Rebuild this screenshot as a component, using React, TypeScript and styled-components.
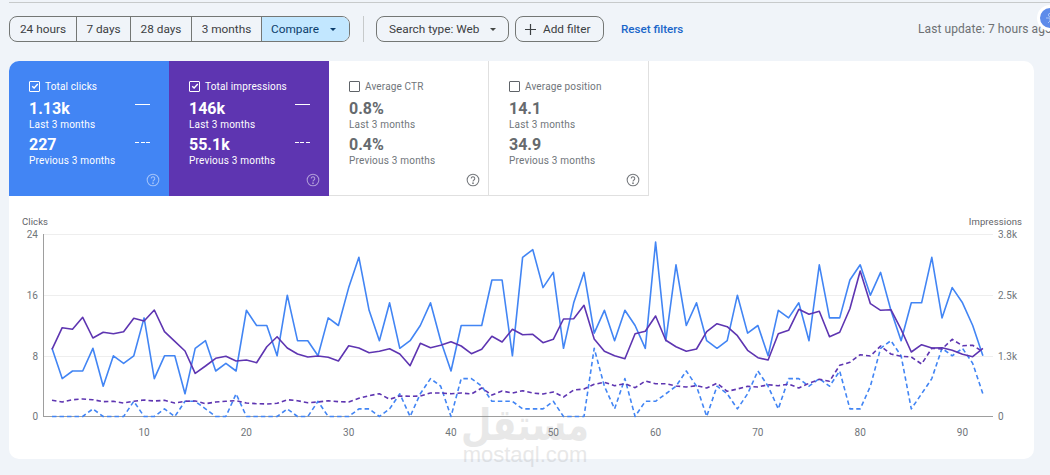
import React from "react";
import styled, { createGlobalStyle } from "styled-components";

const Global = createGlobalStyle`
  html, body { margin: 0; padding: 0; background: #f0f4f9; }
  body { width: 1050px; height: 475px; overflow: hidden; font-family: Roboto, "Liberation Sans", sans-serif; }
`;

const Page = styled.div`
  position: relative;
  width: 1050px;
  height: 475px;
  overflow: hidden;
  background: #f0f4f9;
  border-top: 1px solid transparent;
  box-sizing: border-box;
`;
const TopRule = styled.div`
  height: 1px;
  margin: 1px 0 0 9px;
  background: #c7cacb;
`;
const Toolbar = styled.div`
  display: flex;
  align-items: center;
  height: 26px;
  margin: 13px 0 0 9px;
`;
const Segments = styled.div`
  display: flex;
  height: 26px;
  box-sizing: border-box;
  border: 1px solid #747775;
  border-radius: 8px;
  overflow: hidden;
`;
const Segment = styled.div<{ $w: number; $active?: boolean }>`
  display: flex;
  align-items: center;
  justify-content: ${(p) => (p.$active ? "flex-start" : "center")};
  width: ${(p) => p.$w}px;
  box-sizing: border-box;
  padding-left: ${(p) => (p.$active ? "9px" : "0")};
  font-size: 11.8px;
  color: ${(p) => (p.$active ? "#0b3d6b" : "#3c4043")};
  background: ${(p) => (p.$active ? "#c2e7ff" : "transparent")};
  & + & { border-left: 1px solid #747775; }
`;
const Caret = styled.span<{ $dark?: boolean }>`
  width: 0;
  height: 0;
  margin-left: 11px;
  border-left: 3px solid transparent;
  border-right: 3px solid transparent;
  border-top: 3px solid ${(p) => (p.$dark ? "#444746" : "#0b3d6b")};
`;
const Divider = styled.div`
  width: 1px;
  height: 26px;
  margin: 0 12px 0 13px;
  background: #c7cacb;
`;
const Chip = styled.div<{ $w: number }>`
  display: flex;
  align-items: center;
  height: 26px;
  width: ${(p) => p.$w}px;
  box-sizing: border-box;
  border: 1px solid #747775;
  border-radius: 8px;
  font-size: 11.8px;
  color: #3c4043;
  padding-left: 12px;
  margin-right: 6px;
`;
const PlusIcon = styled.svg`
  width: 11px;
  height: 11px;
  margin-right: 7px;
  margin-left: -3px;
`;
const ResetLink = styled.a`
  margin-left: 11px;
  font-size: 11.6px;
  font-weight: 500;
  color: #1a66c9;
`;
const LastUpdate = styled.div`
  margin-left: auto;
  width: 132px;
  white-space: nowrap;
  font-size: 12px;
  letter-spacing: 0.08px;
  color: #6d7073;
`;
const Bubble = styled.div`
  position: absolute;
  left: 1037px;
  top: 4px;
  width: 26px;
  height: 26px;
  box-sizing: border-box;
  border-radius: 50%;
  background: #5d8bea;
  border: 3px solid #fff;
  display: flex;
  align-items: center;
  justify-content: center;
`;
const Card = styled.div`
  margin: 19px 16px 0 9px;
  height: 398px;
  background: #fff;
  border-radius: 10px;
  overflow: hidden;
`;
const Metrics = styled.div`
  display: flex;
  height: 135px;
`;
const Metric = styled.div<{ $bg?: string }>`
  position: relative;
  display: flex;
  flex-direction: column;
  width: 160px;
  box-sizing: border-box;
  padding: 19px 0 0 20px;
  background: ${(p) => p.$bg || "#fff"};
  color: ${(p) => (p.$bg ? "#fff" : "#70757a")};
  ${(p) => (p.$bg ? "" : "border-right: 1px solid #e0e0e0; border-bottom: 1px solid #e0e0e0;")}
`;
const MetricHead = styled.div`
  display: flex;
  align-items: center;
  height: 12px;
  font-size: 10px;
  letter-spacing: 0.15px;
`;
const CheckBox = styled.span<{ $on?: boolean }>`
  display: flex;
  align-items: center;
  justify-content: center;
  width: 11px;
  height: 11px;
  box-sizing: border-box;
  margin-right: 5px;
  border: 1px solid ${(p) => (p.$on ? "#fff" : "#5f6368")};
  border-radius: 1px;
`;
const Value = styled.div<{ $first?: boolean; $on?: boolean }>`
  font-size: 16px;
  line-height: 19px;
  font-weight: 700;
  color: ${(p) => (p.$on ? "#fff" : "#666a6e")};
  margin-top: ${(p) => (p.$first ? "7px" : "4px")};
`;
const Sub = styled.div`
  font-size: 10px;
  line-height: 12px;
  letter-spacing: 0.2px;
  margin-top: 1px;
`;
const Legend = styled.div<{ $top: number; $dash?: boolean }>`
  position: absolute;
  left: 126px;
  top: ${(p) => p.$top}px;
  width: 15px;
  height: 1px;
  background: ${(p) =>
    p.$dash ? "repeating-linear-gradient(90deg, #fff 0 4px, transparent 4px 5.5px)" : "#fff"};
`;
const Help = styled.svg<{ $faded?: boolean }>`
  position: absolute;
  left: 137px;
  top: 112px;
  width: 14px;
  height: 14px;
  opacity: ${(p) => (p.$faded ? 0.5 : 0.85)};
`;
const ChartHead = styled.div`
  display: flex;
  justify-content: space-between;
  padding: 18px 12px 0 13px;
  height: 15px;
  font-size: 9.5px;
  line-height: 15px;
  letter-spacing: 0.1px;
  color: #5f6368;
`;
const ChartSvg = styled.svg`
  display: block;
  width: 1025px;
  height: 215px;
  font-family: Roboto, "Liberation Sans", sans-serif;
`;
const Watermark = styled.div`
  position: absolute;
  left: 455px;
  top: 400px;
  width: 140px;
  display: flex;
  flex-direction: column;
  align-items: center;
  pointer-events: none;
  color: #8f8f8f;
  opacity: 0.2;
`;
const WatermarkAr = styled.div`
  font-family: "DejaVu Sans", sans-serif;
  font-weight: 700;
  font-size: 35px;
  line-height: 48px;
  transform: scaleY(1.25);
`;
const WatermarkEn = styled.div`
  font-family: "Liberation Sans", sans-serif;
  font-size: 22px;
  line-height: 18px;
  margin-top: -3px;
`;

const clicks = [9,5,6,6,9,4,8,7,8,13,5,8,8,3,9,10,6,7,6,14,12,12,8,16,10,10,8,13,12,17,21,14,10,15,9,10,12,15,10,6,12,12,12,18,18,8,21,22,17,19,9,15,19,11,14,10,14,12,9,23,10,20,12,15,10,9,10,16,11,12,8,14,13,15,10,20,13,13,18,20,16,19,14,10,15,15,21,13,17,15,12,8];
const prevClicks = [0,0,0,0,1,0,0,0,2,0,0,1,0,2,2,1,0,0,3,0,0,0,0,1,0,0,2,0,0,0,1,1,0,1,3,0,3,5,4,0,5,5,4,2,2,2,1,1,1,2,0,0,0,9,4,1,5,0,2,2,3,4,6,4,0,4,3,1,3,6,4,1,5,5,4,5,4,6,1,1,4,9,10,8,1,3,5,9,8,9,7,3];
const impressions = [418,353,358,322,384,367,371,365,325,333,300,365,394,423,490,468,445,439,453,450,458,410,380,414,432,441,438,442,453,407,414,428,424,416,432,467,400,413,406,395,408,431,418,379,396,358,374,373,398,388,327,326,286,387,424,437,446,371,364,318,391,410,424,417,365,341,350,377,421,443,450,371,361,298,313,304,380,367,296,183,281,301,299,358,426,404,414,413,421,433,440,415];
const prevImpressions = [571,576,569,567,569,575,574,579,574,570,573,571,579,574,573,581,576,574,572,579,581,582,580,569,572,578,576,572,575,576,565,557,551,568,558,559,558,549,549,551,549,552,534,555,543,549,542,549,552,546,561,540,537,523,517,527,521,533,513,521,521,528,531,527,534,520,544,537,529,531,524,527,522,534,520,508,514,466,457,434,438,408,432,439,441,462,415,417,388,407,406,425];

// Chart coordinates: svg origin is at page (9, 229).
const X0 = 43;
const XSTEP = 10.23;
const YTOP = 5.5;
const YBASE = 187.5;
const xAt = (i: number) => X0 + i * XSTEP;
const clickPath = (vals: number[]) =>
  vals.map((v, i) => `${i ? "L" : "M"}${xAt(i).toFixed(1)} ${(YBASE - (v / 24) * (YBASE - YTOP)).toFixed(1)}`).join("");
const rawPath = (vals: number[]) =>
  vals.map((v, i) => `${i ? "L" : "M"}${xAt(i).toFixed(1)} ${(v / 3 - 19).toFixed(1)}`).join("");

const BLUE = "#4285f4";
const PURPLE = "#5e35b1";
const LABEL = "#70757a";

function HelpIcon({ color, faded }: { color: string; faded?: boolean }) {
  return (
    <Help viewBox="0 0 24 24" $faded={faded} fill="none" stroke={color} strokeWidth="1.8">
      <circle cx="12" cy="12" r="10" />
      <path d="M9 9.5a3 3 0 1 1 4.6 2.5c-1 .7-1.6 1.3-1.6 2.6" />
      <circle cx="12" cy="17.5" r="0.6" fill={color} />
    </Help>
  );
}

function Check() {
  return (
    <svg width="8" height="8" viewBox="0 0 10 10" fill="none" stroke="#fff" strokeWidth="1.7">
      <path d="M1.5 5.2l2.4 2.4 4.6-5" />
    </svg>
  );
}

type M = { title: string; a: string; b: string; bg?: string };
const metrics: M[] = [
  { title: "Total clicks", a: "1.13k", b: "227", bg: BLUE },
  { title: "Total impressions", a: "146k", b: "55.1k", bg: PURPLE },
  { title: "Average CTR", a: "0.8%", b: "0.4%" },
  { title: "Average position", a: "14.1", b: "34.9" },
];

export default function App() {
  return (
    <Page>
      <Global />
      <TopRule />
      <Toolbar>
        <Segments>
          <Segment $w={66}>24 hours</Segment>
          <Segment $w={54}>7 days</Segment>
          <Segment $w={61}>28 days</Segment>
          <Segment $w={70}>3 months</Segment>
          <Segment $w={88} $active>
            Compare<Caret />
          </Segment>
        </Segments>
        <Divider />
        <Chip $w={133}>
          Search type: Web<Caret $dark />
        </Chip>
        <Chip $w={89}>
          <PlusIcon viewBox="0 0 11 11" stroke="#3c4043" strokeWidth="1.2">
            <path d="M5.5 0v11M0 5.5h11" />
          </PlusIcon>
          Add filter
        </Chip>
        <ResetLink>Reset filters</ResetLink>
        <LastUpdate>Last update: 7 hours ago</LastUpdate>
      </Toolbar>
      <Bubble>
        <svg width="12" height="12" viewBox="0 0 12 12" fill="none" stroke="#a9c4f5" strokeWidth="1">
          <circle cx="6" cy="3" r="1.6" />
          <path d="M2 6h8M6 6v3M4 11l2-2 2 2" />
        </svg>
      </Bubble>
      <Card>
        <Metrics>
          {metrics.map((m) => (
            <Metric key={m.title} $bg={m.bg}>
              <MetricHead>
                <CheckBox $on={!!m.bg}>{m.bg && <Check />}</CheckBox>
                {m.title}
              </MetricHead>
              <Value $first $on={!!m.bg}>{m.a}</Value>
              <Sub>Last 3 months</Sub>
              <Value $on={!!m.bg}>{m.b}</Value>
              <Sub>Previous 3 months</Sub>
              {m.bg && <Legend $top={43} />}
              {m.bg && <Legend $top={81} $dash />}
              <HelpIcon color={m.bg ? "#fff" : "#5f6368"} faded={!!m.bg} />
            </Metric>
          ))}
        </Metrics>
        <ChartHead>
          <span>Clicks</span>
          <span>Impressions</span>
        </ChartHead>
        <ChartSvg viewBox="0 0 1025 215">
          {[5.5, 66.5, 127.5].map((y) => (
            <line key={y} x1={34} x2={984} y1={y} y2={y} stroke="#eeeeee" strokeWidth="1" />
          ))}
          <line x1={34.5} x2={34.5} y1={5} y2={188} stroke="#9e9e9e" strokeWidth="1" />
          <line x1={34} x2={984} y1={187.5} y2={187.5} stroke="#9e9e9e" strokeWidth="1" />
          <g fontSize="10" fill={LABEL} textAnchor="end">
            <text x={29} y={9}>24</text>
            <text x={29} y={70}>16</text>
            <text x={29} y={131}>8</text>
            <text x={29} y={191}>0</text>
          </g>
          <g fontSize="10" fill={LABEL}>
            <text x={989} y={9}>3.8k</text>
            <text x={989} y={70}>2.5k</text>
            <text x={989} y={131}>1.3k</text>
            <text x={989} y={191}>0</text>
          </g>
          <g fontSize="10" fill={LABEL} textAnchor="middle">
            {[10, 20, 30, 40, 50, 60, 70, 80, 90].map((d) => (
              <text key={d} x={xAt(d - 1)} y={206.5}>{d}</text>
            ))}
          </g>
          <g fill="none" strokeWidth="1.6" strokeLinejoin="round">
            <path d={clickPath(prevClicks)} stroke={BLUE} strokeDasharray="4.5 3" />
            <path d={rawPath(prevImpressions)} stroke={PURPLE} strokeDasharray="4.5 3" />
            <path d={clickPath(clicks)} stroke={BLUE} />
            <path d={rawPath(impressions)} stroke={PURPLE} />
          </g>
        </ChartSvg>
      </Card>
      <Watermark>
        <WatermarkAr>مستقل</WatermarkAr>
        <WatermarkEn>mostaql.com</WatermarkEn>
      </Watermark>
    </Page>
  );
}
